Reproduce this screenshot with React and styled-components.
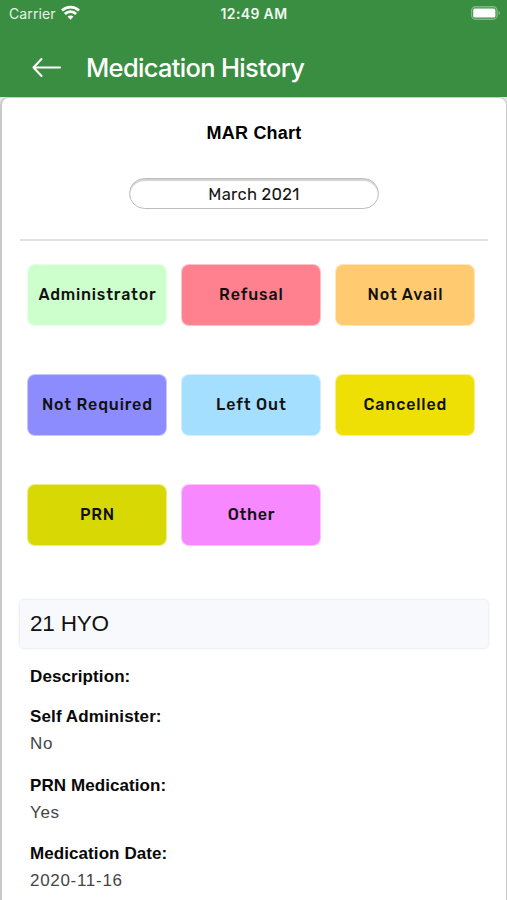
import React from 'react';
import styled, { createGlobalStyle } from 'styled-components';

const GlobalStyle = createGlobalStyle`
  *, *::before, *::after { box-sizing: border-box; }
  html, body { margin: 0; height: 900px; overflow: hidden; background: #fff; }
  h1, h2, h3, p, dl, dt, dd { margin: 0; }
`;

const Screen = styled.div`
  display: flex;
  flex-direction: column;
  width: 507px;
  height: 900px;
  overflow: hidden;
  background: #e4e8e4;
  font-family: 'Liberation Sans', Arial, sans-serif;
`;

const Header = styled.header`
  flex: none;
  height: 97px;
  background: #3a8e42;
  color: #fff;
`;

const StatusBar = styled.div`
  display: grid;
  grid-template-columns: 1fr auto 1fr;
  align-items: center;
  height: 28px;
  padding: 0 8px 0 9px;
  font: 400 14px/28px Inter, sans-serif;
`;

const Carrier = styled.div`
  display: flex;
  align-items: center;
  gap: 5px;
  color: #e6f3e6;
  letter-spacing: 0.1px;

  svg { margin-top: -3px; }
`;

const Clock = styled.div`
  color: #f1f8f1;
  font-weight: 600;
  font-size: 14px;
  letter-spacing: 0.35px;
`;

const BatteryIcon = styled.svg`
  display: block;
  justify-self: end;
  margin: -2px -3px 0 0;
`;

const NavBar = styled.div`
  display: flex;
  align-items: center;
  height: 69px;
  padding: 10px 0 0 32px;
`;

const BackButton = styled.button`
  display: flex;
  margin-top: -1px;
  padding: 0;
  border: 0;
  background: none;
  color: inherit;
`;

const Title = styled.h1`
  margin-left: 24px;
  font: 500 25.5px/32px Inter, sans-serif;
  letter-spacing: -0.68px;
`;

const Sheet = styled.main`
  flex: none;
  display: flex;
  flex-direction: column;
  height: 820px;
  padding: 0 18px;
  border: 2px solid #c9c9c9;
  border-top-width: 1px;
  border-right-width: 1px;
  border-radius: 8px 8px 0 0;
  background: #fff;
`;

const ChartTitle = styled.h2`
  margin-top: 24px;
  font-size: 18px;
  line-height: 22px;
  letter-spacing: 0.2px;
  text-align: center;
`;

const MonthField = styled.div`
  align-self: center;
  width: 250px;
  height: 31px;
  margin-top: 34px;
  border: 1px solid #bdbdbd;
  border-radius: 16px;
  box-shadow: inset 0 2px 1px #d2d2d2;
  color: #161616;
  font: 400 16.5px/31px Rubik, Roboto, sans-serif;
  letter-spacing: 0.3px;
  text-align: center;
`;

const Divider = styled.hr`
  width: 100%;
  height: 2px;
  margin: 30px 0 23.4px;
  border: 0;
  background: #e2e2e2;
`;

const Legend = styled.div`
  display: grid;
  grid-template-columns: repeat(3, 140px);
  grid-auto-rows: 62px;
  gap: 48px 14px;
  padding-left: 7.4px;
`;

const LegendItem = styled.div`
  display: flex;
  align-items: center;
  justify-content: center;
  padding-bottom: 1px;
  border: 1px solid rgba(255, 255, 255, 0.5);
  border-radius: 8px;
  background: ${({ $color }) => $color};
  color: #111;
  font: 500 16px/20px Rubik, Roboto, sans-serif;
  letter-spacing: ${({ $spacing }) => $spacing}px;
`;

const Medication = styled.h2`
  height: 48px;
  margin-top: 54px;
  padding-left: 10px;
  border-radius: 4px;
  background: #f7f9fc;
  box-shadow: 0 0 2px 1px #ebedef;
  color: #111;
  font-weight: 400;
  font-size: 22.5px;
  line-height: 47px;
  letter-spacing: -0.2px;
`;

const Details = styled.dl`
  display: flex;
  flex-direction: column;
  gap: 18.4px;
  padding: 17.6px 0 0 10px;
  font-size: 17px;
  line-height: 22px;
`;

const Label = styled.dt`
  color: #090909;
  font-weight: 700;
  letter-spacing: ${({ $spacing }) => $spacing}px;
`;

const Value = styled.dd`
  padding: 5px 0 1px;
  color: #454545;
  letter-spacing: ${({ $spacing }) => $spacing}px;
`;

const statuses = [
  { name: 'Administrator', color: '#ccffcb', spacing: 0.8 },
  { name: 'Refusal', color: '#ff8190', spacing: 0.9 },
  { name: 'Not Avail', color: '#ffca70', spacing: 0.9 },
  { name: 'Not Required', color: '#8c8cff', spacing: 0.85 },
  { name: 'Left Out', color: '#a5dfff', spacing: 0.9 },
  { name: 'Cancelled', color: '#eee005', spacing: 0.85 },
  { name: 'PRN', color: '#d8d805', spacing: 0.8 },
  { name: 'Other', color: '#f788ff', spacing: 0.7 },
];

const details = [
  { label: 'Description:', labelSpacing: 0.1 },
  { label: 'Self Administer:', labelSpacing: 0.12, value: 'No', spacing: 0.8 },
  { label: 'PRN Medication:', labelSpacing: 0.08, value: 'Yes', spacing: 0.6 },
  { label: 'Medication Date:', labelSpacing: 0.08, value: '2020-11-16', spacing: 0.7 },
];

export default function App() {
  return (
    <Screen>
      <GlobalStyle />
      <Header>
        <StatusBar>
          <Carrier>
            <span>Carrier</span>
            <svg width="19" height="15" viewBox="0 0 19 15" fill="none" stroke="#fff" strokeWidth="2.8">
              <path d="M1 5.6C5.7 1 13.3 1 18 5.6" />
              <path d="M3.9 8.9c3.2-3 8-3 11.2 0" />
              <path d="M6.5 11.6c1.7-1.6 4.3-1.6 6 0L9.5 14.8z" fill="#fff" stroke="none" />
            </svg>
          </Carrier>
          <Clock>12:49 AM</Clock>
          <BatteryIcon width="32" height="16" viewBox="0 0 32 16">
            <rect x="1.6" y="1.7" width="25.5" height="12.6" rx="4" fill="none" stroke="#7dba82" strokeWidth="1.4" />
            <rect x="3.2" y="3.6" width="22.2" height="8.8" rx="1.5" fill="#fff" />
            <path d="M28.6 6c1.7.8 1.7 3.2 0 4z" fill="#8cc08f" />
          </BatteryIcon>
        </StatusBar>
        <NavBar>
          <BackButton aria-label="Back">
            <svg width="30" height="22" viewBox="0 0 30 22" fill="none" stroke="#fff" strokeWidth="2.1" strokeLinecap="round" strokeLinejoin="round">
              <path d="M28 11.5H1.5M9.5 3L1.5 11.5l8 8.5" />
            </svg>
          </BackButton>
          <Title>Medication History</Title>
        </NavBar>
      </Header>
      <Sheet>
        <ChartTitle>MAR Chart</ChartTitle>
        <MonthField>March 2021</MonthField>
        <Divider />
        <Legend>
          {statuses.map(({ name, color, spacing }) => (
            <LegendItem key={name} $color={color} $spacing={spacing}>{name}</LegendItem>
          ))}
        </Legend>
        <Medication>21 HYO</Medication>
        <Details>
          {details.map(({ label, labelSpacing, value, spacing }) => (
            <div key={label}>
              <Label $spacing={labelSpacing}>{label}</Label>
              {value && <Value $spacing={spacing}>{value}</Value>}
            </div>
          ))}
        </Details>
      </Sheet>
    </Screen>
  );
}
